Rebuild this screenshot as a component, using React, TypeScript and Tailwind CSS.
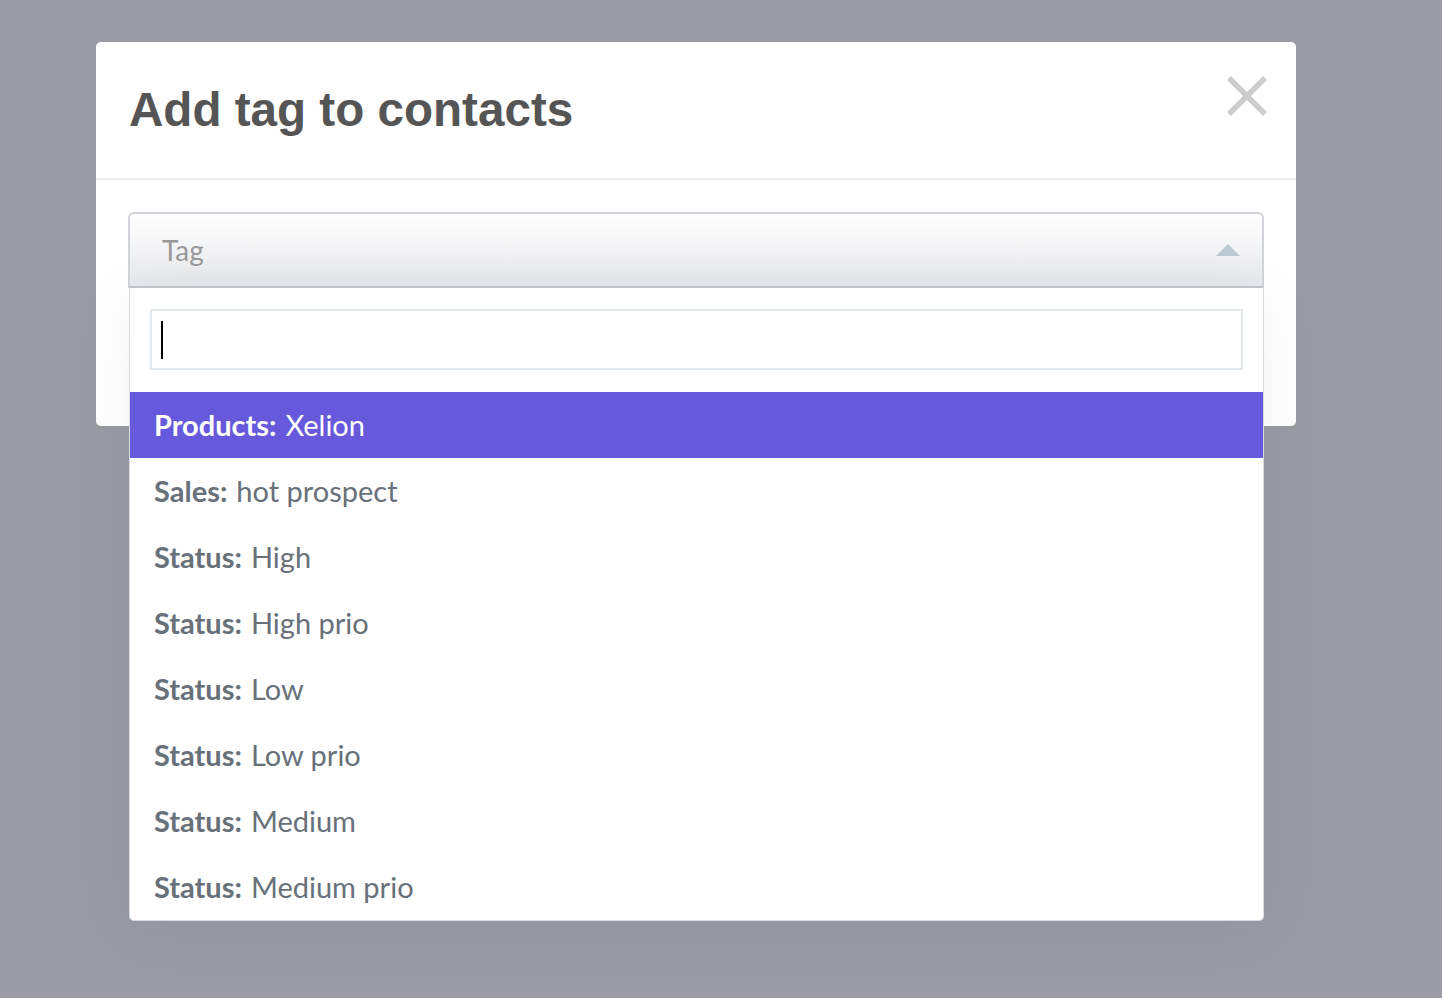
const TAGS: { group: string; name: string }[] = [
  { group: 'Products', name: 'Xelion' },
  { group: 'Sales', name: 'hot prospect' },
  { group: 'Status', name: 'High' },
  { group: 'Status', name: 'High prio' },
  { group: 'Status', name: 'Low' },
  { group: 'Status', name: 'Low prio' },
  { group: 'Status', name: 'Medium' },
  { group: 'Status', name: 'Medium prio' },
]

export default function App() {
  return (
    <div className="h-[998px] w-full overflow-hidden bg-[#9a9ca4] pl-[96px] pt-[42px]">
      <div className="relative w-[1200px] rounded-[5px] bg-white">
        <div className="flex h-[138px] items-start justify-between border-b-2 border-[#e8ecef] pl-[33px] pr-[28px]">
          <h1 className="mt-[40px] text-[47.6px] font-bold leading-[56px] text-[#555555] [font-family:'Liberation_Sans',Arial,sans-serif]">
            Add tag to contacts
          </h1>
          <button type="button" className="mt-[33px] h-[42px] w-[42px]" title="Close">
            <svg viewBox="0 0 42 42" className="h-[42px] w-[42px]">
              <path d="M3 3 L39 39 M39 3 L3 39" stroke="#cccccc" strokeWidth="5.5" />
            </svg>
          </button>
        </div>

        <div className="h-[246px] px-[32px] pt-[32px]">
          <div className="relative">
            <div className="flex h-[76px] items-center justify-between rounded-t-[6px] border-2 border-b-2 border-[#d0d4d9] border-b-[#c3c8ce] bg-gradient-to-b from-white to-[#e6e7ea] pl-[32px] pr-[22px] [font-family:Lato,'Noto_Sans',sans-serif]">
              <span className="text-[28px] text-[#999999]">Tag</span>
              <span className="h-0 w-0 border-x-[12px] border-b-[12px] border-x-transparent border-b-[#bccbd3]" />
            </div>

            <div className="absolute left-[1px] right-0 top-[76px] z-10 rounded-b-[5px] border border-t-0 border-[#d7dde2] bg-white shadow-[0_6px_60px_rgba(0,0,0,0.06)] [font-family:Lato,'Noto_Sans',sans-serif]">
              <div className="px-[20px] pt-[21px] pb-[22px]">
                <div className="flex h-[61px] items-center border-2 border-[#e3e8ec] px-[9px]">
                  <span className="h-[38px] w-[2px] bg-black" />
                </div>
              </div>
              <ul>
                {TAGS.map((tag, i) => (
                  <li
                    key={i}
                    className={`flex h-[66px] items-center px-[24px] text-[29px] ${
                      i === 0 ? 'bg-[#6659db] text-white' : 'text-[#68707a]'
                    }`}
                  >
                    <span className="font-bold">{tag.group}:</span>
                    <span className="ml-[9px]">{tag.name}</span>
                  </li>
                ))}
              </ul>
            </div>
          </div>
        </div>
      </div>
    </div>
  )
}
